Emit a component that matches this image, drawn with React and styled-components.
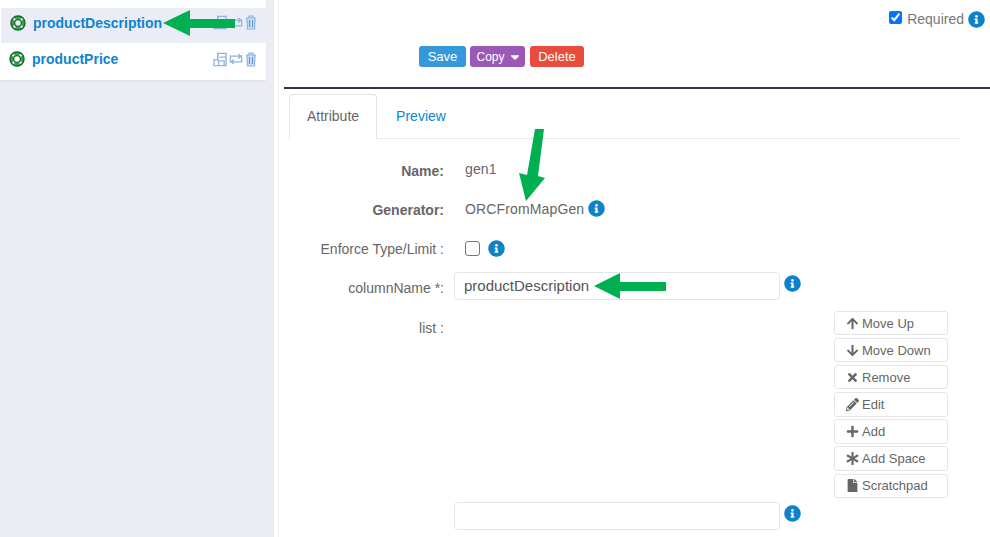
import styled, { createGlobalStyle } from 'styled-components';
import {
  FaArrowUp,
  FaArrowDown,
  FaTimes,
  FaPencilAlt,
  FaPlus,
  FaAsterisk,
  FaFile,
  FaInfoCircle,
  FaCaretDown,
} from 'react-icons/fa';

const GlobalStyle = createGlobalStyle`
  html, body {
    margin: 0;
    padding: 0;
    background: #fff;
    font-family: "Liberation Sans", Arial, sans-serif;
    color: #666;
  }
`;

const Page = styled.div`
  position: relative;
  display: flex;
  width: 990px;
  height: 537px;
  overflow: hidden;
`;

const Sidebar = styled.aside`
  width: 274px;
  height: 100%;
  flex-shrink: 0;
  background: #ebedf3;
`;

const AttrList = styled.div`
  width: 266px;
  padding: 8px 0 0 1px;
  box-sizing: border-box;
  background: #fff;
  box-shadow: 0 1px 2px rgba(0, 0, 0, 0.06);
`;

const AttrRow = styled.div`
  display: flex;
  align-items: center;
  box-sizing: border-box;
  height: ${(props) => (props.$active ? '35px' : '36px')};
  margin-bottom: ${(props) => (props.$active ? '1px' : '0')};
  padding: 0 9px 6px ${(props) => (props.$active ? '9px' : '8px')};
  background: ${(props) => (props.$active ? '#eaedf5' : '#fff')};
`;

const AttrName = styled.a`
  margin-left: 7px;
  flex: 1;
  color: #0d84cf;
  font-size: 14px;
  font-weight: 700;
`;

const RowIcons = styled.div`
  display: flex;
  align-items: center;
  gap: 2px;
`;

const Divider = styled.div`
  width: 1px;
  flex-shrink: 0;
  margin-left: 4px;
  background: #eceef2;
`;

const Main = styled.main`
  flex: 1;
  min-width: 0;
  padding-left: 5px;
`;

const TopBar = styled.div`
  height: 89px;
  box-sizing: border-box;
  padding: 9px 5px 0 135px;
  border-bottom: 2px solid #2c3745;
`;

const RequiredRow = styled.label`
  display: flex;
  justify-content: flex-end;
  align-items: center;
  height: 20px;
  font-size: 14px;
  color: #777;
`;

const CheckBox = styled.input.attrs({ type: 'checkbox' })`
  width: 13px;
  height: 13px;
  margin: 0 5px 4px 0;
  accent-color: #0075ff;
`;

const ActionBar = styled.div`
  display: flex;
  gap: 4px;
  margin-top: 17px;
`;

const ActionBtn = styled.button`
  display: flex;
  align-items: center;
  justify-content: center;
  gap: 3px;
  width: ${(props) => props.$width}px;
  height: 21px;
  margin-right: ${(props) => props.$after || 0}px;
  padding: 0 0 0 ${(props) => props.$inset || 0}px;
  border: 0;
  border-radius: 3px;
  background: ${(props) => props.$bg};
  color: #fff;
  font-family: inherit;
  font-size: ${(props) => props.$size || 13}px;
  svg {
    width: 14px;
    height: 14px;
  }
`;

const InfoIcon = styled(FaInfoCircle)`
  width: 17px;
  height: 17px;
  color: #0d82c9;
  flex-shrink: 0;
  margin-left: ${(props) => props.$gap || 4}px;
  margin-bottom: ${(props) => props.$lift || 0}px;
`;

const Tabs = styled.div`
  display: flex;
  width: 671px;
  height: 44px;
  margin: 5px 0 0 5px;
  border-bottom: 1px solid #e8e8e8;
`;

const Tab = styled.a`
  display: flex;
  align-items: center;
  justify-content: center;
  box-sizing: border-box;
  width: ${(props) => props.$width}px;
  height: 45px;
  padding-bottom: 3px;
  font-size: 14px;
  color: ${(props) => (props.$active ? '#666' : '#0d84cf')};
  background: ${(props) => (props.$active ? '#fff' : 'transparent')};
  border: 1px solid ${(props) => (props.$active ? '#e4e4e4' : 'transparent')};
  border-bottom: 0;
  border-radius: 4px 4px 0 0;
`;

const Form = styled.div`
  padding: 12px 0 0 5px;
`;

const FormRow = styled.div`
  display: grid;
  grid-template-columns: 155px 1fr;
  column-gap: 10px;
  align-items: center;
  height: ${(props) => props.$height}px;
`;

const Label = styled.div`
  text-align: right;
  font-size: 14px;
  font-weight: ${(props) => (props.$bold ? 700 : 400)};
  color: #666;
  padding-top: ${(props) => props.$drop || 0}px;
`;

const Value = styled.div`
  display: flex;
  align-items: center;
  padding-left: 11px;
  padding-bottom: ${(props) => props.$lift || 0}px;
  font-size: 14px;
  letter-spacing: 0.01em;
  color: #666;
`;

const Field = styled.div`
  display: flex;
  align-items: center;
`;

const PlainCheck = styled.span`
  display: block;
  box-sizing: border-box;
  width: 15px;
  height: 15px;
  border: 1px solid #777;
  border-radius: 3px;
  background: #fff;
`;

const TextBox = styled.input`
  box-sizing: border-box;
  width: 326px;
  height: 28px;
  padding: 0 9px 2px;
  border: 1px solid #e4e6ea;
  border-radius: 4px;
  font-family: inherit;
  font-size: 15px;
  color: #555;
  outline: 0;
`;

const ListRow = styled.div`
  display: grid;
  grid-template-columns: 155px 370px 114px;
  column-gap: 10px;
  height: 191px;
  margin-top: 7px;
`;

const ListLabel = styled(Label)`
  padding-top: 9px;
`;

const ListButtons = styled.div`
  grid-column: 3;
  display: flex;
  flex-direction: column;
  gap: 2.8px;
`;

const ListBtn = styled.button`
  display: flex;
  align-items: center;
  gap: 3px;
  width: 114px;
  height: 24.3px;
  padding: 0 0 0 11px;
  border: 1px solid #e6e6e6;
  border-radius: 3px;
  background: #fff;
  color: #666;
  font-family: inherit;
  font-size: 13px;
  svg {
    width: 13px;
    height: 13px;
  }
`;

const Arrows = styled.svg`
  position: absolute;
  left: 0;
  top: 0;
  width: 990px;
  height: 537px;
  pointer-events: none;
  polygon {
    fill: #00b050;
  }
`;

function RingIcon() {
  return (
    <svg width="16" height="16" viewBox="0 0 16 16" fill="none" style={{ flexShrink: 0 }}>
      <circle cx="8" cy="8" r="5.5" stroke="#2fa84a" strokeWidth="3" />
      <path d="M3.5 3.5 6 6M12.5 3.5 10 6M3.5 12.5 6 10M12.5 12.5 10 10" stroke="#fff" strokeWidth="2.2" />
      <circle cx="8" cy="8" r="7" stroke="#14662a" strokeWidth="1.4" />
      <circle cx="8" cy="8" r="3.4" stroke="#14662a" strokeWidth="1.3" />
    </svg>
  );
}

function DiskIcon() {
  return (
    <svg width="14" height="15" viewBox="0 0 15 15" fill="none" stroke="#8db4e2" strokeWidth="1.4">
      <path d="M5 1h9v13H1V8h4z" />
      <path d="M5 1v7M7 5h7M6 14v-5h6v5" />
    </svg>
  );
}

function SwapIcon() {
  return (
    <svg width="14" height="14" viewBox="0 0 15 14" fill="none" stroke="#8db4e2" strokeWidth="1.4">
      <path d="M1.5 11V4h10M10 1.5 12.5 4 10 6.5" />
      <path d="M13.5 3v7h-10M5 7.5 2.5 10 5 12.5" />
    </svg>
  );
}

function TrashIcon() {
  return (
    <svg width="12" height="15" viewBox="0 0 12 15" fill="#cfe0f4" stroke="#8db4e2" strokeWidth="1.2">
      <path d="M4 2.5V1h4v1.5M1 3h10M2 3l.5 11h7L10 3z" />
      <path d="M4.5 5v7M7.5 5v7" stroke="#5f98d8" />
    </svg>
  );
}

function AttrItem({ name, active }) {
  return (
    <AttrRow $active={active}>
      <RingIcon />
      <AttrName>{name}</AttrName>
      <RowIcons>
        <DiskIcon />
        <SwapIcon />
        <TrashIcon />
      </RowIcons>
    </AttrRow>
  );
}

export default function App() {
  return (
    <Page>
      <GlobalStyle />
      <Sidebar>
        <AttrList>
          <AttrItem name="productDescription" active />
          <AttrItem name="productPrice" />
        </AttrList>
      </Sidebar>
      <Divider />
      <Main>
        <TopBar>
          <RequiredRow>
            <CheckBox defaultChecked />
            Required
            <InfoIcon />
          </RequiredRow>
          <ActionBar>
            <ActionBtn $width={47} $bg="#3498db">Save</ActionBtn>
            <ActionBtn $width={55} $bg="#9b59b6" $size={12} $after={1} $inset={3}>
              Copy <FaCaretDown />
            </ActionBtn>
            <ActionBtn $width={54} $bg="#e74c3c">Delete</ActionBtn>
          </ActionBar>
        </TopBar>
        <Tabs>
          <Tab $active $width={88}>Attribute</Tab>
          <Tab $width={88}>Preview</Tab>
        </Tabs>
        <Form>
          <FormRow $height={39}>
            <Label $bold>Name:</Label>
            <Value $lift={4}>gen1</Value>
          </FormRow>
          <FormRow $height={39}>
            <Label $bold>Generator:</Label>
            <Value $lift={2}>
              ORCFromMapGen
              <InfoIcon />
            </Value>
          </FormRow>
          <FormRow $height={39}>
            <Label>Enforce Type/Limit :</Label>
            <Value>
              <PlainCheck />
              <InfoIcon $gap={8} />
            </Value>
          </FormRow>
          <FormRow $height={36}>
            <Label $drop={4}>columnName *:</Label>
            <Field>
              <TextBox defaultValue="productDescription" />
              <InfoIcon $lift={5} />
            </Field>
          </FormRow>
          <ListRow>
            <ListLabel>list :</ListLabel>
            <ListButtons>
              <ListBtn><FaArrowUp /> Move Up</ListBtn>
              <ListBtn><FaArrowDown /> Move Down</ListBtn>
              <ListBtn><FaTimes /> Remove</ListBtn>
              <ListBtn><FaPencilAlt /> Edit</ListBtn>
              <ListBtn><FaPlus /> Add</ListBtn>
              <ListBtn><FaAsterisk /> Add Space</ListBtn>
              <ListBtn><FaFile /> Scratchpad</ListBtn>
            </ListButtons>
          </ListRow>
          <FormRow $height={28}>
            <span />
            <Field>
              <TextBox />
              <InfoIcon $lift={5} />
            </Field>
          </FormRow>
        </Form>
      </Main>
      <Arrows viewBox="0 0 990 537">
        <polygon points="163,23 190,10 190,19 235,19 235,28 190,28 190,36" />
        <polygon points="535,129 544,129 538,176 545,178 526,201 519,173 527,175" />
        <polygon points="594,286 620,273 620,282 666,282 666,291 620,291 620,299" />
      </Arrows>
    </Page>
  );
}
